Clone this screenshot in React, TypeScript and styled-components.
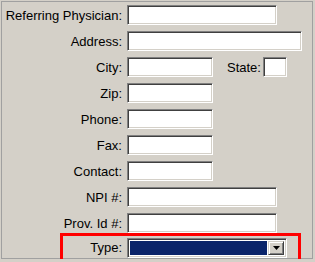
import React from "react";
import styled, { createGlobalStyle } from "styled-components";

const Global = createGlobalStyle`
  html, body { margin: 0; padding: 0; background: #d4d0c8; }
  body { font-family: "Liberation Sans", Arial, sans-serif; font-size: 13px; color: #000; }
`;

const Panel = styled.div`
  box-sizing: border-box;
  margin: 1px 0 0 1px;
  width: 312px;
  height: 258px;
  border: 1px solid #a0a0a0;
  padding: 3px 0 0 0;
  display: flex;
  flex-direction: column;
  gap: 6px;
`;

const Row = styled.div`
  display: flex;
  align-items: center;
  height: 20px;
`;

const Label = styled.span<{ $w?: number }>`
  width: ${(p) => p.$w ?? 120}px;
  text-align: right;
  white-space: nowrap;
  margin-right: 5px;
  flex-shrink: 0;
`;

const Input = styled.div<{ $w: number }>`
  box-sizing: border-box;
  width: ${(p) => p.$w}px;
  height: 20px;
  background: #fff;
  border-style: solid;
  border-width: 1px;
  border-color: #808080 #fff #fff #808080;
  box-shadow: inset 1px 1px 0 #404040, inset -1px -1px 0 #d4d0c8;
`;

const StateLabel = styled.span`
  margin-left: 14px;
  margin-right: 2px;
`;

const Highlight = styled.div`
  box-sizing: border-box;
  margin-top: -6px;
  margin-left: 58px;
  width: 241px;
  height: 29px;
  flex-shrink: 0;
  border: 3px solid #ff0000;
  display: flex;
  align-items: center;
`;

const Select = styled.div`
  box-sizing: border-box;
  width: 160px;
  height: 20px;
  display: flex;
  border-style: solid;
  border-width: 1px;
  border-color: #808080 #fff #fff #808080;
  box-shadow: inset 1px 1px 0 #404040, inset -1px -1px 0 #d4d0c8;
  padding: 2px;
  background: #fff;
`;

const SelectValue = styled.div`
  flex: 1;
  background: #0a246a;
  margin-right: 1px;
`;

const DropButton = styled.div`
  box-sizing: border-box;
  width: 16px;
  background: #d4d0c8;
  border-style: solid;
  border-width: 1px;
  border-color: #d4d0c8 #404040 #404040 #d4d0c8;
  box-shadow: inset 1px 1px 0 #fff, inset -1px -1px 0 #808080;
  display: flex;
  align-items: center;
  justify-content: center;
`;

const rows: [string, number][] = [
  ["Referring Physician:", 150],
  ["Address:", 175],
];

const rows2: [string, number][] = [
  ["Zip:", 86],
  ["Phone:", 86],
  ["Fax:", 86],
  ["Contact:", 86],
  ["NPI #:", 150],
  ["Prov. Id #:", 150],
];

export default function App() {
  return (
    <>
      <Global />
      <Panel>
        {rows.map(([l, w]) => (
          <Row key={l}>
            <Label>{l}</Label>
            <Input $w={w} />
          </Row>
        ))}
        <Row>
          <Label>City:</Label>
          <Input $w={86} />
          <StateLabel>State:</StateLabel>
          <Input $w={24} />
        </Row>
        {rows2.map(([l, w]) => (
          <Row key={l}>
            <Label>{l}</Label>
            <Input $w={w} />
          </Row>
        ))}
        <Highlight>
          <Label $w={59}>Type:</Label>
          <Select>
            <SelectValue />
            <DropButton>
              <svg width="7" height="4" viewBox="0 0 7 4">
                <path d="M0 0h7L3.5 4z" fill="#000" />
              </svg>
            </DropButton>
          </Select>
        </Highlight>
      </Panel>
    </>
  );
}
